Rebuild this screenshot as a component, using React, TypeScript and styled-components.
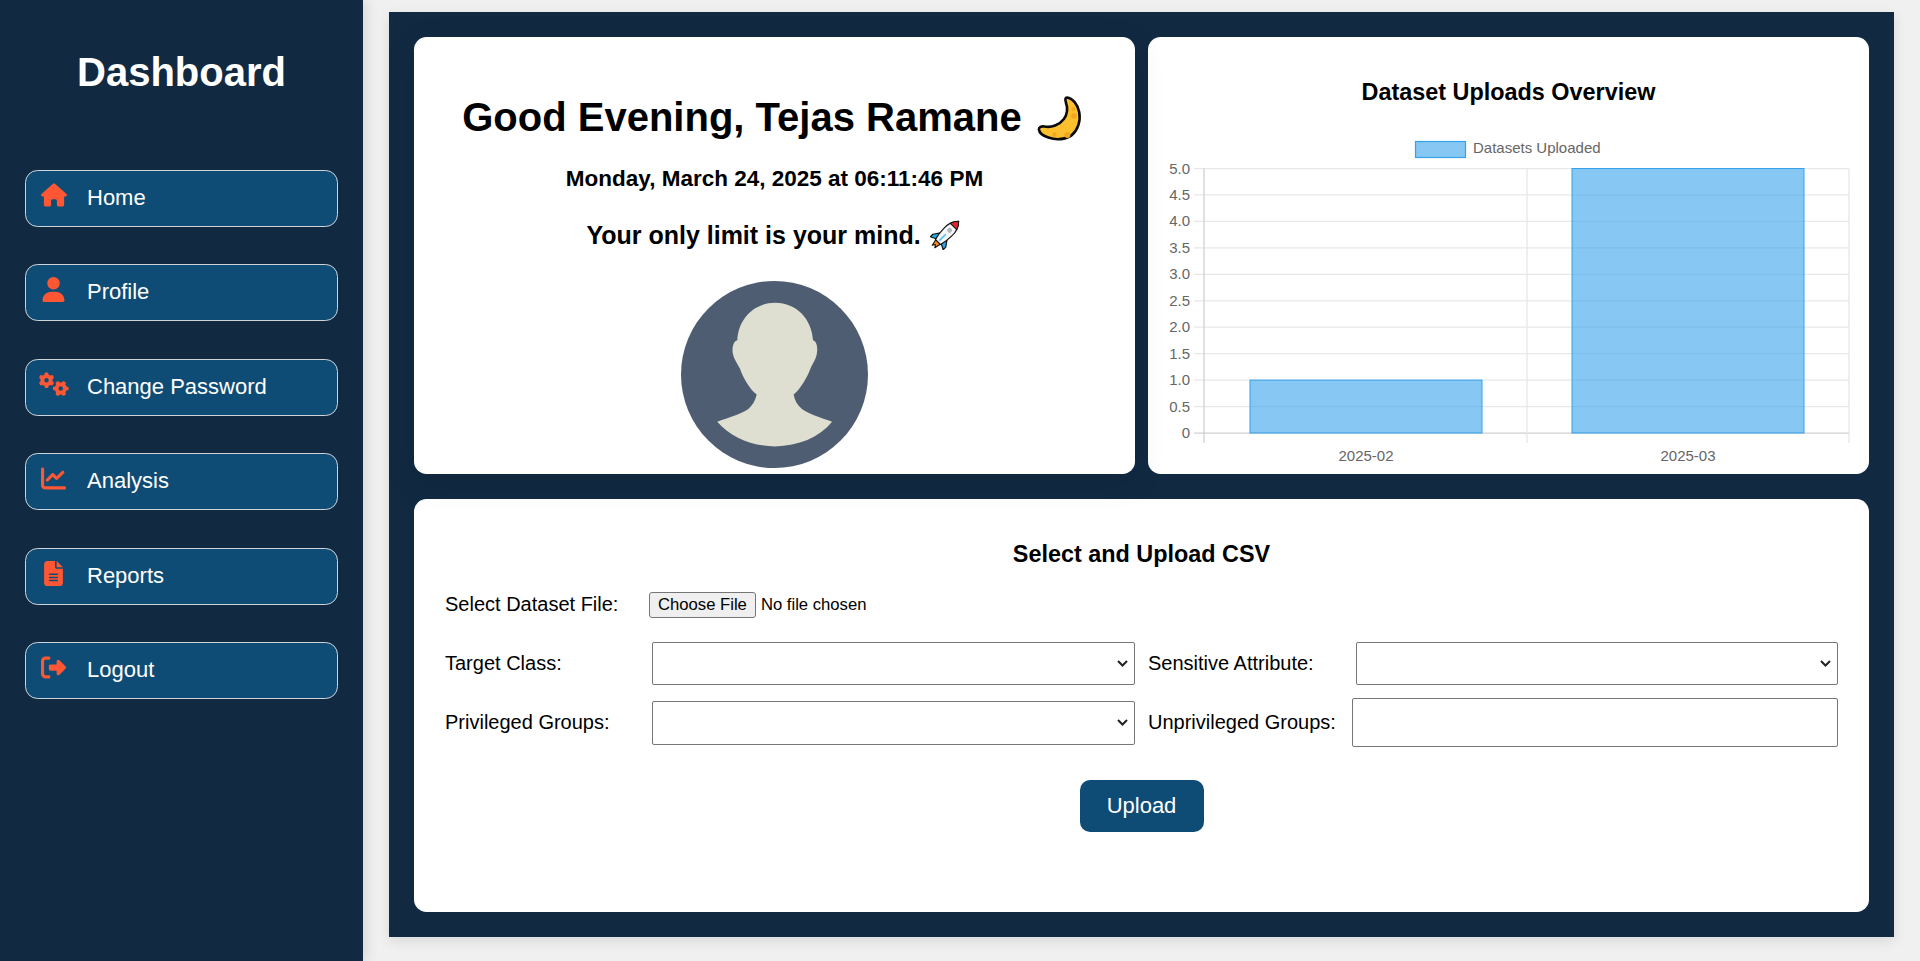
import styled, { createGlobalStyle } from "styled-components";
import { FaChartLine, FaFileLines, FaGears, FaHouse, FaRightFromBracket, FaUser } from "react-icons/fa6";

const navItems = [
  { label: "Home", icon: <FaHouse />, iconSize: 26 },
  { label: "Profile", icon: <FaUser />, iconSize: 25 },
  { label: "Change Password", icon: <FaGears />, iconSize: 30 },
  { label: "Analysis", icon: <FaChartLine />, iconSize: 25 },
  { label: "Reports", icon: <FaFileLines />, iconSize: 25 },
  { label: "Logout", icon: <FaRightFromBracket />, iconSize: 25 },
];

// chart geometry, in px inside the svg
const CHART = { left: 56, right: 701, top: 33.5, zero: 298, tickEnd: 308 };
const yTicks = [5, 4.5, 4, 3.5, 3, 2.5, 2, 1.5, 1, 0.5, 0];
const bars = [
  { label: "2025-02", x: 102, value: 1, center: 218 },
  { label: "2025-03", x: 424, value: 5, center: 540 },
];

function valueToY(value: number) {
  return CHART.zero - (value / 5) * (CHART.zero - CHART.top);
}

function UploadsChart() {
  return (
    <ChartSvg viewBox="0 0 720 339" width="720" height="339">
      <rect x="267.5" y="6.5" width="50" height="16" fill="rgba(54,162,235,0.6)" stroke="#36a2eb" strokeWidth="1.2" />
      <ChartText x="325" y="17.5">Datasets Uploaded</ChartText>

      {yTicks.map((tick) => (
        <g key={tick}>
          <line
            x1={46}
            x2={CHART.right}
            y1={valueToY(tick)}
            y2={valueToY(tick)}
            stroke={tick === 0 ? "#d0d0d0" : "#e8e8e8"}
            strokeWidth="1.25"
          />
          <ChartText x="42" y={valueToY(tick) + 5} textAnchor="end">
            {tick === 0 ? "0" : tick.toFixed(1)}
          </ChartText>
        </g>
      ))}

      {[CHART.left, 379, CHART.right].map((x, i) => (
        <line
          key={x}
          x1={x}
          x2={x}
          y1={CHART.top}
          y2={CHART.tickEnd}
          stroke={i === 0 ? "#cfcfcf" : "#e6e6e6"}
          strokeWidth="1.25"
        />
      ))}

      {bars.map((bar) => (
        <g key={bar.label}>
          <rect
            x={bar.x}
            y={valueToY(bar.value)}
            width="232"
            height={CHART.zero - valueToY(bar.value)}
            fill="rgba(54,162,235,0.6)"
            stroke="#36a2eb"
            strokeWidth="1"
          />
          <ChartText x={bar.center} y="326" textAnchor="middle">
            {bar.label}
          </ChartText>
        </g>
      ))}
    </ChartSvg>
  );
}

function MoonEmoji() {
  return (
    <MoonSvg viewBox="7.6 3 54 54" width="54" height="54">
      <path
        d="M41.7 9.5C47 10 52 16 53.8 24C55.5 33 52.5 42 46 47.5C39 51.5 30 52 23 49.5C18 48 14 45.5 13.5 41.5C13.5 39 16 38 19 38.5C26 40 34 37 38.5 31C42 26 42.5 20 40.5 14.5C39.5 11 40 9.5 41.7 9.5Z"
        fill="#fcc02e"
        stroke="#0a0a0a"
        strokeWidth="2.6"
        strokeLinejoin="round"
      />
      <circle cx="48" cy="21" r="2.1" fill="#f0a81e" />
      <circle cx="48.5" cy="28" r="2.8" fill="#f0a81e" />
      <circle cx="29" cy="46.5" r="2.2" fill="#f0a81e" />
      <circle cx="42" cy="47" r="3" fill="#f0a81e" />
    </MoonSvg>
  );
}

function RocketEmoji() {
  return (
    <RocketSvg viewBox="0 0 34 34" width="31" height="31">
      <g transform="translate(18 16) rotate(45)">
        <path d="M-3.5 13L-2 20L0 17L2 20L3.5 13Z" fill="#f58a1f" stroke="#111" strokeWidth="1.2" strokeLinejoin="round" />
        <path d="M-5 4L-10 11L-10 15L-4 12Z" fill="#27a9e6" stroke="#111" strokeWidth="1.3" strokeLinejoin="round" />
        <path d="M5 4L10 11L10 15L4 12Z" fill="#27a9e6" stroke="#111" strokeWidth="1.3" strokeLinejoin="round" />
        <path d="M0 -19C5 -14 6.5 -8 6 -2C6 4 5 9 4 13L-4 13C-5 9 -6 4 -6 -2C-6.5 -8 -5 -14 0 -19Z" fill="#f4f6f8" stroke="#111" strokeWidth="1.3" strokeLinejoin="round" />
        <path d="M0 -19C2.6 -16.4 4.2 -13.6 5 -11L-5 -11C-4.2 -13.6 -2.6 -16.4 0 -19Z" fill="#e0232e" stroke="#111" strokeWidth="1.1" strokeLinejoin="round" />
        <circle cx="0" cy="-5" r="2.7" fill="#b4b8bc" />
        <path d="M0 1V11" stroke="#4fc3f0" strokeWidth="1.8" />
      </g>
    </RocketSvg>
  );
}

function Avatar() {
  return (
    <AvatarSvg viewBox="0 0 186 186" width="187" height="187">
      <circle cx="93" cy="93" r="93" fill="#4f5d73" />
      <path
        d="M93.7 21.7C72 21.7 57 38 56 59C52 60 51 66 51.3 70.7C52 77 56 82 58.7 87.3C62 97 68 107 75.3 113C74 119 71 124 67 127.3C59 133 46 136 36 140C50 156 70 164 93.5 164.5C117 164 137 156 150.3 140C140 136 128 133 120.3 127.3C116 124 113 119 112 113C119 107 125 97 128.7 87.3C131 82 135 77 135.3 70.7C136 66 135 60 131.3 59C130 38 115 21.7 93.7 21.7Z"
        fill="#dedfd0"
      />
    </AvatarSvg>
  );
}

export default function App() {
  return (
    <Layout>
      <GlobalStyle />
      <Sidebar>
        <Brand>Dashboard</Brand>
        <NavList>
          {navItems.map((item) => (
            <NavItem key={item.label}>
              <NavIcon $size={item.iconSize}>{item.icon}</NavIcon>
              {item.label}
            </NavItem>
          ))}
        </NavList>
      </Sidebar>

      <Main>
        <Panel>
          <TopRow>
            <GreetingCard>
              <Greeting>
                Good Evening, Tejas Ramane <MoonEmoji />
              </Greeting>
              <DateLine>Monday, March 24, 2025 at 06:11:46 PM</DateLine>
              <Motto>
                Your only limit is your mind. <RocketEmoji />
              </Motto>
              <Avatar />
            </GreetingCard>
            <ChartCard>
              <CardTitle>Dataset Uploads Overview</CardTitle>
              <UploadsChart />
            </ChartCard>
          </TopRow>

          <UploadCard>
            <FormTitle>Select and Upload CSV</FormTitle>
            <FileRow>
              <FileLabel $width={204}>Select Dataset File:</FileLabel>
              <FileInput type="file" />
            </FileRow>
            <FieldGrid>
              <Field>
                <FieldLabel $width={207}>Target Class:</FieldLabel>
                <Select $height={43} />
              </Field>
              <Field>
                <FieldLabel $width={207.5}>Sensitive Attribute:</FieldLabel>
                <Select $height={43} />
              </Field>
              <Field>
                <FieldLabel $width={207}>Privileged Groups:</FieldLabel>
                <Select $height={44} />
              </Field>
              <Field>
                <FieldLabel $width={204}>Unprivileged Groups:</FieldLabel>
                <TextInput type="text" />
              </Field>
            </FieldGrid>
            <UploadButton type="button">Upload</UploadButton>
          </UploadCard>
        </Panel>
      </Main>
    </Layout>
  );
}

const GlobalStyle = createGlobalStyle`
  * {
    box-sizing: border-box;
  }

  body {
    margin: 0;
    background: #f0f0f0;
    font-family: "Liberation Sans", Arial, sans-serif;
    color: #000;
  }
`;

const Layout = styled.div`
  display: flex;
  height: 961px;
  overflow: hidden;
`;

const Sidebar = styled.aside`
  width: 363px;
  flex-shrink: 0;
  padding: 49px 25px 0;
  background: #112a42;
  box-shadow: 4px 0 12px rgba(0, 0, 0, 0.1);
  position: relative;
`;

const Brand = styled.h1`
  margin: 0;
  font-size: 40px;
  line-height: 46px;
  font-weight: 700;
  text-align: center;
  color: #fff;
`;

const NavList = styled.nav`
  display: flex;
  flex-direction: column;
  gap: 37.9px;
  margin-top: 75px;
`;

const NavItem = styled.a`
  display: flex;
  align-items: center;
  gap: 18px;
  height: 56.6px;
  padding: 0 12px 1px;
  border: 1px solid #cfd4d8;
  border-radius: 12.5px;
  background: #0f4c75;
  color: #fff;
  font-size: 22px;
`;

const NavIcon = styled.span<{ $size: number }>`
  display: flex;
  justify-content: center;
  flex: 0 0 31px;
  margin-top: -5px;
  color: #ff5733;

  svg {
    flex-shrink: 0;
    width: auto;
    height: ${(p) => p.$size}px;
  }
`;

const Main = styled.main`
  flex: 1;
  padding: 12px 26px 24px;
`;

const Panel = styled.div`
  display: flex;
  flex-direction: column;
  gap: 25px;
  height: 925px;
  padding: 25px;
  background: #112a42;
  box-shadow: 0 4px 12px rgba(0, 0, 0, 0.1);
`;

const TopRow = styled.div`
  display: grid;
  grid-template-columns: 1fr 1fr;
  gap: 13px;
  height: 437px;
`;

const Card = styled.section`
  background: #fff;
  border-radius: 12.5px;
  overflow: hidden;
`;

const GreetingCard = styled(Card)`
  position: relative;
  z-index: 1;
  display: flex;
  flex-direction: column;
  align-items: center;
  padding-top: 53.5px;
  overflow: visible;
  box-shadow: 0 8px 32px rgba(0, 0, 0, 0.1);
`;

const Greeting = styled.h2`
  margin: 0;
  font-size: 40px;
  line-height: 46px;
  font-weight: 700;
  white-space: nowrap;
`;

const MoonSvg = styled.svg`
  vertical-align: -14px;
`;

const DateLine = styled.p`
  margin: 21px 0 0;
  font-size: 22.5px;
  line-height: 26px;
  font-weight: 700;
`;

const Motto = styled.p`
  margin: 27.5px 0 0;
  font-size: 25px;
  line-height: 29px;
  font-weight: 700;
  white-space: nowrap;
`;

const RocketSvg = styled.svg`
  margin: 0 2px;
  vertical-align: -6px;
`;

const AvatarSvg = styled.svg`
  display: block;
  margin-top: 30.5px;
  flex-shrink: 0;
`;

const ChartCard = styled(Card)`
  display: flex;
  flex-direction: column;
`;

const CardTitle = styled.h3`
  margin: 0;
  padding-top: 42px;
  font-size: 23.4px;
  line-height: 26px;
  font-weight: 700;
  text-align: center;
`;

const ChartSvg = styled.svg`
  display: block;
  margin-top: 30px;
`;

const ChartText = styled.text`
  font-family: "Liberation Sans", Arial, sans-serif;
  font-size: 15px;
  fill: #666;
`;

const UploadCard = styled(Card)`
  display: flex;
  flex-direction: column;
  height: 413px;
  padding: 42px 31px 0;
`;

const FormTitle = styled.h3`
  margin: 0;
  font-size: 23.4px;
  line-height: 26px;
  font-weight: 700;
  text-align: center;
`;

const FileRow = styled.div`
  display: flex;
  align-items: center;
  height: 26px;
  margin-top: 25px;
`;

const FieldLabel = styled.label<{ $width: number }>`
  flex: 0 0 ${(p) => p.$width}px;
  font-size: 20px;
  white-space: nowrap;
`;

const FileLabel = styled(FieldLabel)`
  margin-top: -2px;
`;

const FileInput = styled.input`
  font-family: "Liberation Sans", Arial, sans-serif;
  font-size: 16.67px;
  color: #000;

  &::file-selector-button {
    height: 26px;
    margin-right: 5px;
    padding: 0 8px;
    border: 1px solid #767676;
    border-radius: 3px;
    background: #efefef;
    color: #000;
    font: inherit;
  }
`;

const FieldGrid = styled.div`
  display: grid;
  grid-template-columns: 690px 690px;
  column-gap: 13px;
  row-gap: 13px;
  margin-top: 24px;
`;

const Field = styled.div`
  display: flex;
  align-items: center;
`;

const Select = styled.select<{ $height: number }>`
  flex: 1;
  min-width: 0;
  height: ${(p) => p.$height}px;
  border: 1px solid #767676;
  border-radius: 2px;
  appearance: none;
  background: #fff
    url("data:image/svg+xml,%3Csvg xmlns='http://www.w3.org/2000/svg' width='11' height='7' viewBox='0 0 11 7'%3E%3Cpath d='M1 1l4.5 4.5L10 1' fill='none' stroke='%23222' stroke-width='2'/%3E%3C/svg%3E")
    no-repeat right 6px center;
`;

const TextInput = styled.input`
  flex: 1;
  min-width: 0;
  height: 49px;
  border: 1px solid #767676;
  border-radius: 2px;
  background: #fff;
`;

const UploadButton = styled.button`
  align-self: center;
  width: 124px;
  height: 51.5px;
  margin-top: 33px;
  border: none;
  border-radius: 10px;
  background: #0f4c75;
  color: #fff;
  font-family: inherit;
  font-size: 22px;
`;
